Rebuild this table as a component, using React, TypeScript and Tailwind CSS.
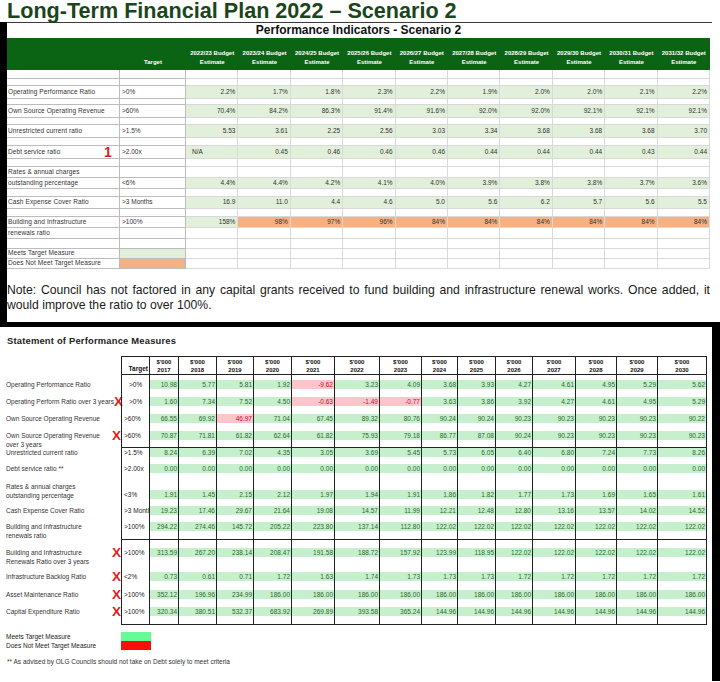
const TOP_GRID = "grid grid-cols-[113px_66px_repeat(10,minmax(0,1fr))]";
const B_GRID =
  "grid grid-cols-[115px_29px_29px_38px_37px_38px_43px_45px_42px_36px_38px_37px_43px_41px_41px_49px]";

const G = "bg-[#e2efda]";
const O = "bg-[#f4b183]";

const topYears = [
  "2022/23",
  "2023/24",
  "2024/25",
  "2025/26",
  "2026/27",
  "2027/28",
  "2028/29",
  "2029/30",
  "2030/31",
  "2031/32",
];

type TopRow = {
  h: string;
  label?: string;
  target?: string;
  values?: string[];
  fills?: string[];
  mark?: boolean;
  legend?: string;
};

const allG = Array(10).fill(G);

const topRows: TopRow[] = [
  { h: "h-[9px]" },
  { h: "h-[7px]" },
  {
    h: "h-[13px]",
    label: "Operating Performance Ratio",
    target: ">0%",
    values: ["2.2%", "1.7%", "1.8%", "2.3%", "2.2%", "1.9%", "2.0%", "2.0%", "2.1%", "2.2%"],
    fills: allG,
  },
  { h: "h-[6px]" },
  {
    h: "h-[13px]",
    label: "Own Source Operating Revenue",
    target: ">60%",
    values: ["70.4%", "84.2%", "86.3%", "91.4%", "91.6%", "92.0%", "92.0%", "92.1%", "92.1%", "92.1%"],
    fills: allG,
  },
  { h: "h-[7px]" },
  {
    h: "h-[13px]",
    label: "Unrestricted current ratio",
    target: ">1.5%",
    values: ["5.53", "3.61", "2.25", "2.56", "3.03", "3.34", "3.68", "3.68", "3.68", "3.70"],
    fills: allG,
  },
  { h: "h-[8px]" },
  {
    h: "h-[13px]",
    label: "Debt service ratio",
    target: ">2.00x",
    values: ["N/A", "0.45", "0.46", "0.46", "0.46", "0.44", "0.44", "0.44", "0.43", "0.44"],
    fills: allG,
    mark: true,
  },
  { h: "h-[8px]" },
  { h: "h-[11px]", label: "Rates & annual charges" },
  {
    h: "h-[11px]",
    label: "outstanding percentage",
    target: "<6%",
    values: ["4.4%", "4.4%", "4.2%", "4.1%", "4.0%", "3.9%", "3.8%", "3.8%", "3.7%", "3.6%"],
    fills: allG,
  },
  { h: "h-[8px]" },
  {
    h: "h-[12px]",
    label: "Cash Expense Cover Ratio",
    target: ">3 Months",
    values: ["16.9", "11.0", "4.4", "4.6", "5.0", "5.6", "6.2", "5.7", "5.6", "5.5"],
    fills: allG,
  },
  { h: "h-[8px]" },
  {
    h: "h-[11px]",
    label: "Building and Infrastructure",
    target: ">100%",
    values: ["158%", "98%", "97%", "96%", "84%", "84%", "84%", "84%", "84%", "84%"],
    fills: [G, O, O, O, O, O, O, O, O, O],
  },
  { h: "h-[11px]", label: "renewals ratio" },
  { h: "h-[10px]" },
  { h: "h-[10px]", label: "Meets Target Measure", legend: G },
  { h: "h-[10px]", label: "Does Not Meet Target Measure", legend: O },
];

const bYears = [
  "2017", "2018", "2019", "2020", "2021", "2022", "2023",
  "2024", "2025", "2026", "2027", "2028", "2029", "2030",
];

type BRow = {
  h: string;
  pt: string;
  lpt: string;
  label: string[];
  target: string;
  tpl: string;
  values: string[];
  bad?: number[];
  x?: boolean;
  line?: boolean;
};

const bRows: BRow[] = [
  {
    h: "h-[18px]", pt: "pt-[5px]", lpt: "pt-[5px]",
    label: ["Operating Performance Ratio"], target: ">0%", tpl: "pl-[7px]",
    values: ["10.98", "5.77", "5.81", "1.92", "-9.62", "3.23", "4.09", "3.68", "3.93", "4.27", "4.61", "4.95", "5.29", "5.62"],
    bad: [4],
  },
  {
    h: "h-[17px]", pt: "pt-[4px]", lpt: "pt-[4px]",
    label: ["Operating Perform Ratio over 3 years"], target: ">0%", tpl: "pl-[7px]", x: true,
    values: ["1.60", "7.34", "7.52", "4.50", "-0.63", "-1.49", "-0.77", "3.63", "3.86", "3.92", "4.27", "4.61", "4.95", "5.29"],
    bad: [4, 5, 6],
  },
  {
    h: "h-[17px]", pt: "pt-[4px]", lpt: "pt-[4px]",
    label: ["Own Source Operating Revenue"], target: ">60%", tpl: "pl-[2px]",
    values: ["66.55", "69.92", "46.97", "71.04", "67.45", "89.32", "80.76", "90.24", "90.24", "90.23", "90.23", "90.23", "90.23", "90.22"],
    bad: [2],
  },
  {
    h: "h-[20px]", pt: "pt-[4px]", lpt: "pt-[4px]",
    label: ["Own Source Operating Revenue", "over 3 years"], target: ">60%", tpl: "pl-[2px]", x: true,
    values: ["70.87", "71.81", "61.82", "62.64", "61.82", "75.93", "79.18", "86.77", "87.08", "90.24", "90.23", "90.23", "90.23", "90.23"],
  },
  {
    h: "h-[13px]", pt: "pt-0", lpt: "pt-[1px]", line: true,
    label: ["Unrestricted current ratio"], target: ">1.5%", tpl: "pl-[2px]",
    values: ["8.24", "6.39", "7.02", "4.35", "3.05", "3.69", "5.45", "5.73", "6.05", "6.40", "6.80", "7.24", "7.73", "8.26"],
  },
  {
    h: "h-[17px]", pt: "pt-[4px]", lpt: "pt-[4px]",
    label: ["Debt service ratio  **"], target: ">2.00x", tpl: "pl-[2px]",
    values: Array(14).fill("0.00"),
  },
  {
    h: "h-[25px]", pt: "pt-[13px]", lpt: "pt-[5px]",
    label: ["Rates & annual charges", "outstanding percentage"], target: "<3%", tpl: "pl-[2px]",
    values: ["1.91", "1.45", "2.15", "2.12", "1.97", "1.94", "1.91", "1.86", "1.82", "1.77", "1.73", "1.69", "1.65", "1.61"],
  },
  {
    h: "h-[17px]", pt: "pt-[4px]", lpt: "pt-[4px]",
    label: ["Cash Expense Cover Ratio"], target: ">3 Month", tpl: "pl-[2px]",
    values: ["19.23", "17.46", "29.67", "21.64", "19.08", "14.57", "11.99", "12.21", "12.48", "12.80", "13.16", "13.57", "14.02", "14.52"],
  },
  {
    h: "h-[20px]", pt: "pt-[3px]", lpt: "pt-[3px]",
    label: ["Building and Infrastructure", "renewals ratio"], target: ">100%", tpl: "pl-[2px]",
    values: ["294.22", "274.46", "145.72", "205.22", "223.80", "137.14", "112.80", "122.02", "122.02", "122.02", "122.02", "122.02", "122.02", "122.02"],
  },
  {
    h: "h-[26px]", pt: "pt-[8px]", lpt: "pt-[9px]", line: true,
    label: ["Building and Infrastructure", "Renewals Ratio over 3 years"], target: ">100%", tpl: "pl-[2px]", x: true,
    values: ["313.59", "267.20", "238.14", "208.47", "191.58", "188.72", "157.92", "123.99", "118.95", "122.02", "122.02", "122.02", "122.02", "122.02"],
  },
  {
    h: "h-[21px]", pt: "pt-[7px]", lpt: "pt-[7px]",
    label: ["Infrastructure Backlog Ratio"], target: "<2%", tpl: "pl-[2px]", x: true,
    values: ["0.73", "0.61", "0.71", "1.72", "1.63", "1.74", "1.73", "1.73", "1.73", "1.72", "1.72", "1.72", "1.72", "1.72"],
  },
  {
    h: "h-[17px]", pt: "pt-[4px]", lpt: "pt-[4px]",
    label: ["Asset Maintenance Ratio"], target: ">100%", tpl: "pl-[2px]", x: true,
    values: ["352.12", "196.96", "234.99", ...Array(11).fill("186.00")],
  },
  {
    h: "h-[21px]", pt: "pt-[4px]", lpt: "pt-[4px]",
    label: ["Capital Expenditure Ratio"], target: ">100%", tpl: "pl-[2px]", x: true,
    values: ["320.34", "380.51", "532.37", "683.92", "269.89", "393.58", "365.24", ...Array(7).fill("144.96")],
  },
];

const TopPanel = () => (
  <div className="border-l-[7px] border-b-[5px] border-black">
    <div className="w-[705px] border-t border-[#3a3a3a]">
      <div className="w-[703px] h-[15px] text-center text-[12px] leading-[15px] font-bold text-[#111]">
        Performance Indicators - Scenario 2
      </div>

      {/* green header band */}
      <div className={`${TOP_GRID} w-[703px] h-[32px] bg-[#0a6414] text-white font-bold text-[6px] leading-[9px]`}>
        <div />
        <div className="flex items-end justify-center pb-[3px]">Target</div>
        {topYears.map((y) => (
          <div key={y} className="flex flex-col items-center justify-end pb-[3px]">
            <span>{y} Budget</span>
            <span>Estimate</span>
          </div>
        ))}
      </div>

      {/* rows */}
      {topRows.map((r, i) => (
        <div key={i} className={`${TOP_GRID} w-[703px] ${r.h} text-[6.5px] leading-none text-[#333]`}>
          <div className="flex items-center justify-between border-r border-b border-[#bcbcbc] pl-[1px] pr-[7px] whitespace-nowrap tracking-[0.1px]">
            <span>{r.label}</span>
            {r.mark && <span className="text-[14px] leading-[10px] font-bold text-[#d8211d]">1</span>}
          </div>
          <div className={`flex items-center border-r border-b border-[#bcbcbc] pl-[2px] whitespace-nowrap ${r.legend ?? ""}`}>
            {r.target}
          </div>
          {Array.from({ length: 10 }).map((_, j) => {
            const v = r.values?.[j];
            const fill = r.fills?.[j] ?? "";
            const left = v === "N/A";
            return (
              <div
                key={j}
                className={`flex items-center border-r border-b border-[#d9d9d9] ${fill} ${
                  left ? "justify-start pl-[6px]" : "justify-end pr-[2px]"
                }`}
              >
                {v}
              </div>
            );
          })}
        </div>
      ))}

      <div className="mt-[14px] w-[703px] text-[12.2px] leading-[15px] text-[#1a1a1a]">
        <p className="text-justify [text-align-last:justify]">
          Note: Council has not factored in any capital grants received to fund building and infrastructure renewal works. Once added, it
        </p>
        <p>would improve the ratio to over 100%.</p>
      </div>
      <div className="h-[9px]" />
    </div>
  </div>
);

const BottomPanel = () => (
  <div className="h-[354px] border-r-[8px] border-black pl-[6px] pt-[8px] text-[#333]">
    <div className="text-[9.4px] leading-[12px] font-bold tracking-[0.2px] text-[#222] pl-[1px]">
      Statement of Performance Measures
    </div>

    <div className="mt-[9px]">
      {/* header */}
      <div className={`${B_GRID} h-[19px] font-bold text-[#111]`}>
        <div />
        <div className="flex items-end justify-end border border-[#222] pr-[1px] pb-[1px] text-[6.5px] leading-[8px]">
          Target
        </div>
        {bYears.map((y) => (
          <div
            key={y}
            className="flex flex-col items-center justify-center border-t border-b border-r border-[#222] text-[6px] leading-[8px]"
          >
            <span>$'000</span>
            <span>{y}</span>
          </div>
        ))}
      </div>

      {bRows.map((r, i) => (
        <div key={i} className={`${B_GRID} ${r.h} text-[6.5px] leading-[9px]`}>
          <div className={`flex justify-between ${r.lpt}`}>
            <div className="whitespace-nowrap text-[#333]">
              {r.label.map((l) => (
                <div key={l}>{l}</div>
              ))}
            </div>
            {r.x && <span className="text-[13.5px] leading-[9px] font-bold text-[#e3211b]">X</span>}
          </div>
          <div
            className={`border-l border-r border-[#222] whitespace-nowrap overflow-hidden text-[#222] ${r.tpl} ${r.pt} ${
              r.line ? "border-t" : ""
            }`}
          >
            {r.target}
          </div>
          {r.values.map((v, j) => {
            const bad = r.bad?.includes(j);
            return (
              <div key={j} className={`border-r border-[#222] ${r.pt} ${r.line ? "border-t" : ""}`}>
                <div
                  className={`h-[9px] text-right pr-[1px] ${
                    bad ? "bg-[#fcc5cc] text-[#c3112a]" : "bg-[#c6efce] text-[#2c6a2c]"
                  }`}
                >
                  {v}
                </div>
              </div>
            );
          })}
        </div>
      ))}

      {/* bottom border */}
      <div className={B_GRID}>
        <div />
        <div className="col-span-15 h-[1px] bg-[#222]" />
      </div>
    </div>

    {/* legend */}
    <div className="mt-[7px] grid grid-cols-[115px_30px] text-[6.5px] leading-[9px] text-[#222]">
      <div>Meets Target Measure</div>
      <div className="h-[9px] bg-[#66fa98]" />
      <div>Does Not Meet Target Measure</div>
      <div className="h-[9px] bg-[#fd0d0d]" />
    </div>

    <div className="mt-[7px] pl-[1px] text-[6.5px] leading-[9px] text-[#333]">
      ** As advised by OLG Councils should not take on Debt solely to meet criteria
    </div>
  </div>
);

export default function App() {
  return (
    <div className="w-[720px] h-[682px] overflow-hidden bg-white font-['Liberation_Sans',Arial,sans-serif]">
      <h1 className="pl-[7px] text-[21.6px] leading-[22px] font-bold text-[#1b451b] whitespace-nowrap">
        Long-Term Financial Plan 2022 – Scenario 2
      </h1>
      <TopPanel />
      <BottomPanel />
    </div>
  );
}
